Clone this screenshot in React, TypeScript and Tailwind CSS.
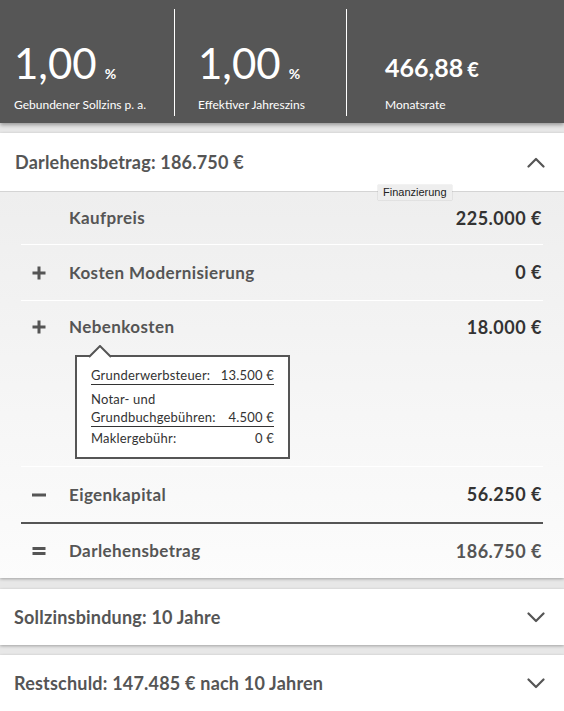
import React from "react"

const font = { fontFamily: "Lato, 'Open Sans', sans-serif" }

function Chevron({ up }: { up?: boolean }) {
    return (
        <svg width="18" height="11" viewBox="0 0 18 11" className="text-[#555]">
            <polyline
                points={up ? "1.5,9.5 9,2 16.5,9.5" : "1.5,1.5 9,9 16.5,1.5"}
                fill="none"
                stroke="currentColor"
                strokeWidth="2.2"
                strokeLinecap="round"
                strokeLinejoin="round"
            />
        </svg>
    )
}

function Sign({ kind }: { kind: "plus" | "minus" | "eq" | "none" }) {
    if (kind === "none") return <span className="w-[36px]" />
    return (
        <span className="w-[36px] flex justify-center">
            <svg width="14" height="14" viewBox="0 0 14 14" className="text-[#555]">
                {kind === "plus" && (
                    <>
                        <rect x="0.5" y="5.5" width="13" height="3" fill="currentColor" />
                        <rect x="5.5" y="0.5" width="3" height="13" fill="currentColor" />
                    </>
                )}
                {kind === "minus" && <rect x="0" y="5.5" width="14" height="3" fill="currentColor" />}
                {kind === "eq" && (
                    <>
                        <rect x="0.5" y="3" width="13" height="3" fill="currentColor" />
                        <rect x="0.5" y="8" width="13" height="3" fill="currentColor" />
                    </>
                )}
            </svg>
        </span>
    )
}

function Row({
    sign,
    label,
    value,
    strong = true,
    h = "h-[52px]",
}: {
    sign: "plus" | "minus" | "eq" | "none"
    label: string
    value: string
    strong?: boolean
    h?: string
}) {
    return (
        <div className={`flex items-center ${h}`}>
            <Sign kind={sign} />
            <span className="ml-[12px] text-[17px] tracking-[0.4px] font-bold text-[#555]">{label}</span>
            <span
                className={`ml-auto mr-[1px] text-[18px] tracking-[0.5px] font-bold ${
                    strong ? "text-[#333]" : "text-[#555]"
                }`}
            >
                {value}
            </span>
        </div>
    )
}

function Collapsed({ title }: { title: string }) {
    return (
        <div className="bg-white h-[56px] flex items-center justify-between pl-[14px] pr-[19px] shadow-[0_1px_3px_rgba(0,0,0,0.3)]">
            <span className="text-[18px] tracking-[0.2px] font-bold text-[#555]">{title}</span>
            <Chevron />
        </div>
    )
}

export default function App() {
    return (
        <div className="min-h-screen bg-[#e7e7e7] overflow-hidden" style={font}>
            {/* summary bar */}
            <div className="h-[123px] bg-[#565656] flex text-white shadow-[0_2px_4px_rgba(0,0,0,0.35)] relative z-10">
                <div className="w-[175px] mt-[9px] h-[107px] border-r border-white pl-[14px] flex flex-col justify-end pb-[3px]">
                    <div className="leading-[40px] mb-[3px] whitespace-nowrap">
                        <span className="text-[42px] font-normal">1,00</span>
                        <span className="text-[14px] font-bold ml-[8px]">%</span>
                    </div>
                    <div className="text-[12px] leading-[16px]">Gebundener Sollzins p. a.</div>
                </div>
                <div className="w-[172px] mt-[9px] h-[107px] border-r border-white pl-[23px] flex flex-col justify-end pb-[3px]">
                    <div className="leading-[40px] mb-[3px] whitespace-nowrap">
                        <span className="text-[42px] font-normal">1,00</span>
                        <span className="text-[14px] font-bold ml-[8px]">%</span>
                    </div>
                    <div className="text-[12px] leading-[16px]">Effektiver Jahreszins</div>
                </div>
                <div className="flex-1 mt-[9px] h-[107px] pl-[38px] flex flex-col justify-end pb-[3px]">
                    <div className="leading-[24px] mb-[14px] whitespace-nowrap">
                        <span className="text-[25px] font-bold">466,88</span>
                        <span className="text-[20px] font-bold ml-[4px]">€</span>
                    </div>
                    <div className="text-[12px] leading-[16px]">Monatsrate</div>
                </div>
            </div>

            {/* expanded card */}
            <div className="mt-[10px] bg-white shadow-[0_1px_3px_rgba(0,0,0,0.3)] relative">
                <div className="h-[58px] flex items-center justify-between pl-[15px] pr-[19px]">
                    <span className="text-[18px] tracking-[0.2px] font-bold text-[#555]">Darlehensbetrag: 186.750 €</span>
                    <Chevron up />
                </div>
                <div
                    className="absolute left-[378px] top-[52px] z-20 bg-[#eeeeee] px-[5px] h-[15px] flex items-center text-[11px] text-[#222] shadow-[0_0_1px_rgba(0,0,0,0.3)]"
                    style={{ fontFamily: "'Liberation Sans', Arial, sans-serif" }}
                >
                    Finanzierung
                </div>
                <div className="border-t border-[#d4d4d4] bg-gradient-to-b from-[#eeeeee] to-[#fcfcfc] px-[21px]">
                    <Row sign="none" label="Kaufpreis" value="225.000 €" />
                    <div className="h-px bg-white" />
                    <Row sign="plus" label="Kosten Modernisierung" value="0 €" h="h-[55px]" />
                    <div className="h-px bg-white" />
                    <div className="pb-[7px]">
                        <Row sign="plus" label="Nebenkosten" value="18.000 €" />
                        <div className="relative ml-[54px] mt-[2px] w-[215px] border-2 border-[#555] bg-white px-[14px] text-[13px] tracking-[0.2px] leading-[18px] text-[#333]">
                            <svg
                                width="24"
                                height="13"
                                viewBox="0 0 24 13"
                                className="absolute left-[11px] top-[-12px]"
                            >
                                <polygon points="1,12 12,1 23,12" fill="white" />
                                <polyline points="1,12 12,1 23,12" fill="none" stroke="#555" strokeWidth="2" />
                            </svg>
                            <div className="pt-[9px] flex justify-between border-b border-[#333] whitespace-nowrap">
                                <span>Grunderwerbsteuer:</span>
                                <span>13.500 €</span>
                            </div>
                            <div className="pt-[5px] flex justify-between items-end border-b border-[#333] whitespace-nowrap">
                                <span>
                                    Notar- und
                                    <br />
                                    Grundbuchgebühren:
                                </span>
                                <span>4.500 €</span>
                            </div>
                            <div className="pt-[2px] pb-[10px] flex justify-between">
                                <span>Maklergebühr:</span>
                                <span>0 €</span>
                            </div>
                        </div>
                    </div>
                    <div className="h-px bg-white" />
                    <Row sign="minus" label="Eigenkapital" value="56.250 €" h="h-[55px]" />
                    <div className="h-[2px] bg-[#555]" />
                    <Row sign="eq" label="Darlehensbetrag" value="186.750 €" strong={false} h="h-[54px]" />
                </div>
            </div>

            <div className="mt-[11px]">
                <Collapsed title="Sollzinsbindung: 10 Jahre" />
            </div>
            <div className="mt-[10px]">
                <Collapsed title="Restschuld: 147.485 € nach 10 Jahren" />
            </div>
        </div>
    )
}
